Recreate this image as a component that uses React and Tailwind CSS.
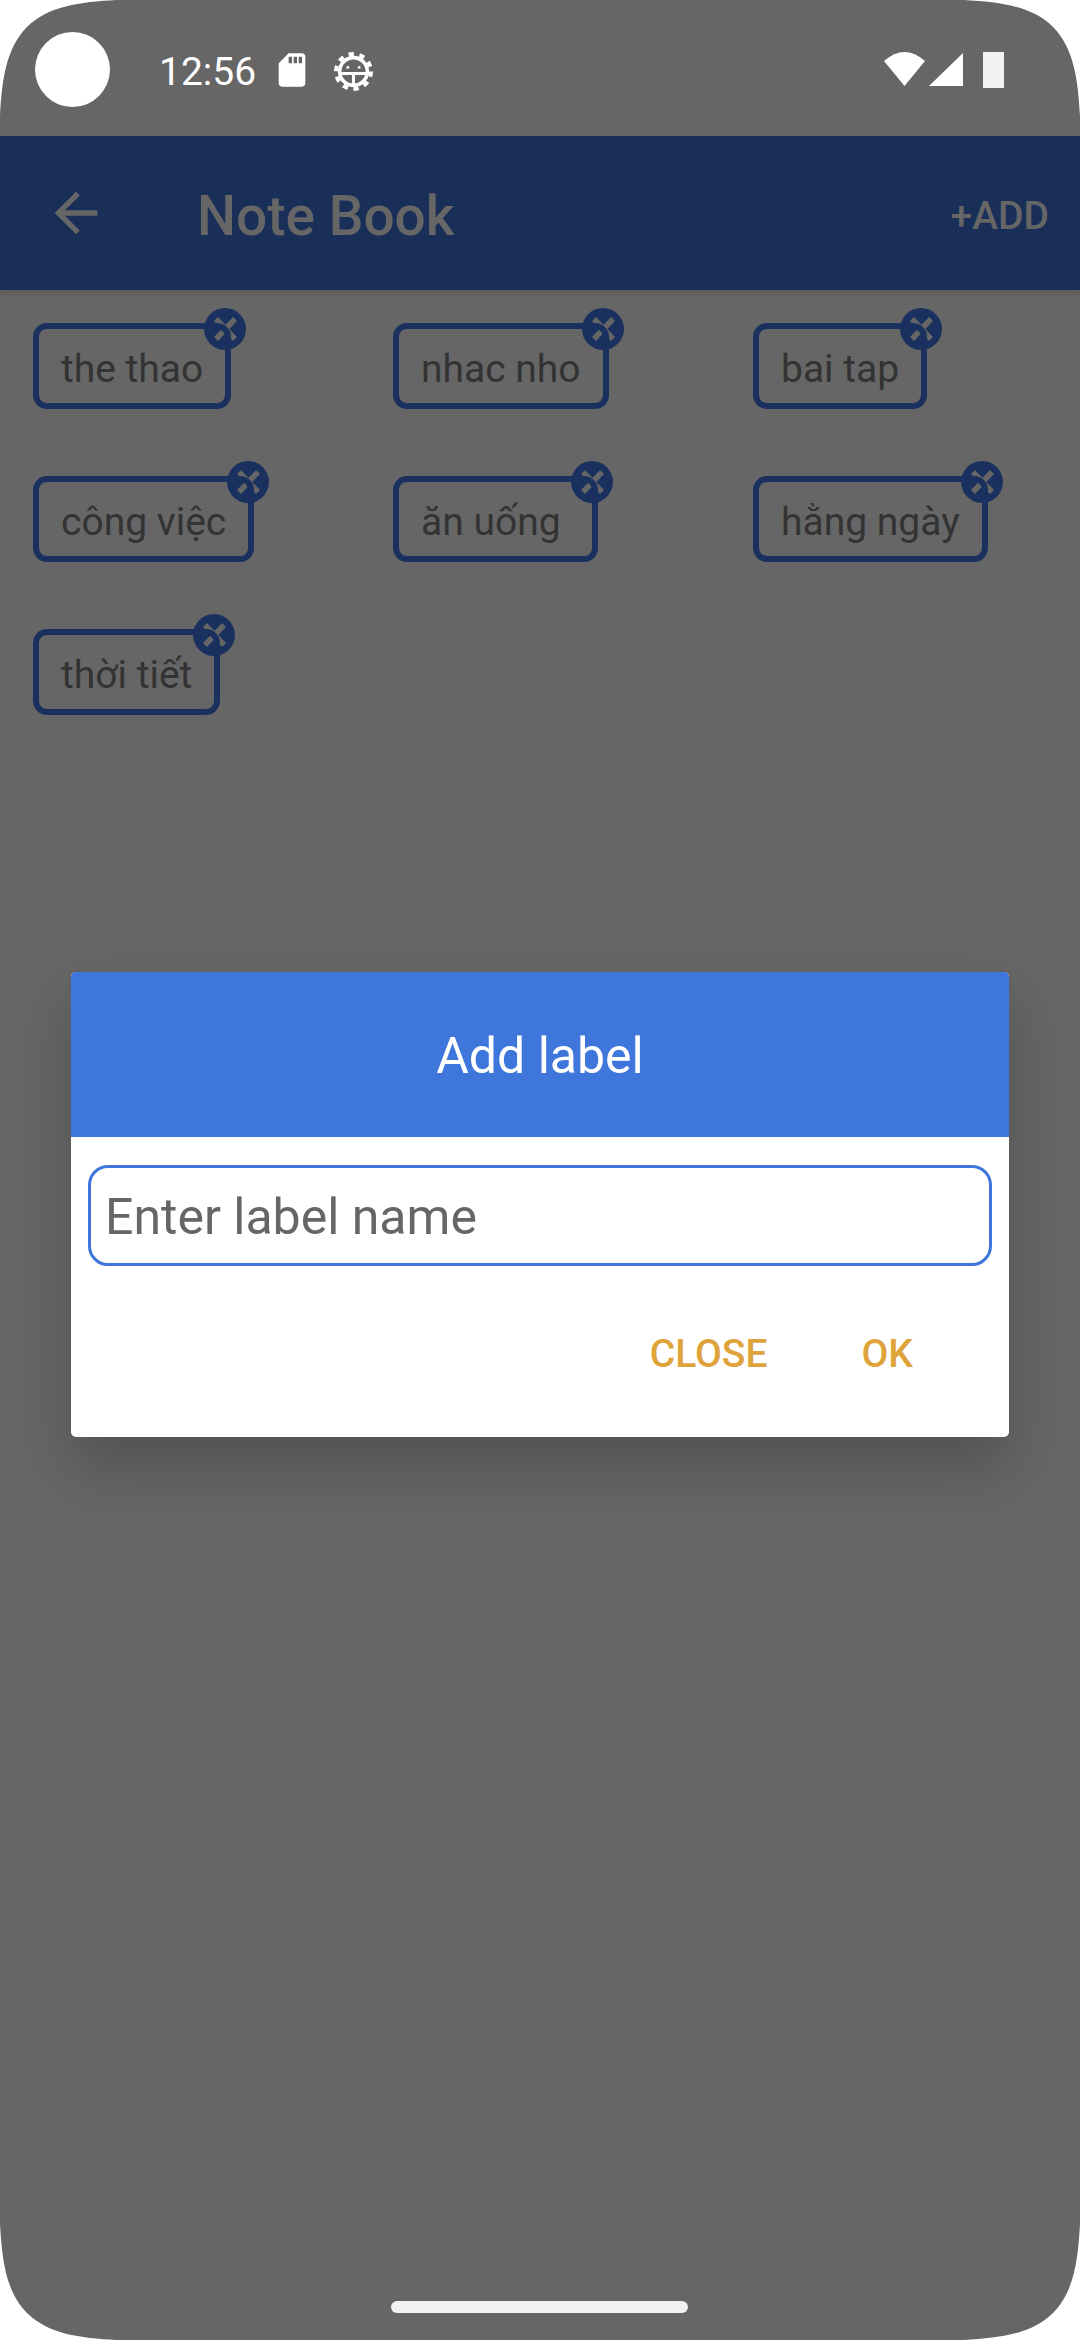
import { useState } from 'react'

// the reference keeps a trailing space in "ăn uống", the tag is wider for it
const tags = ['the thao', 'nhac nho', 'bai tap', 'công việc', 'ăn uống\u00A0', 'hằng ngày', 'thời tiết']

function GearIcon() {
  return (
    <svg width="39" height="39" viewBox="0 0 38 38" fill="none" stroke="#fff">
      <circle cx="19" cy="19" r="13.5" strokeWidth="3.5" />
      <circle cx="19" cy="19" r="17" strokeWidth="4" strokeDasharray="5.2 5.48" />
      <path d="M6 21H32M19 21V33" strokeWidth="3" />
      <circle cx="13.5" cy="15" r="1.4" fill="#fff" stroke="none" />
      <circle cx="24.5" cy="15" r="1.4" fill="#fff" stroke="none" />
    </svg>
  )
}

function SdIcon() {
  return (
    <svg width="40" height="40" viewBox="0 0 24 24" fill="#fff">
      <path d="M18 2h-8L4.02 8 4 20c0 1.1.9 2 2 2h12c1.1 0 2-.9 2-2V4c0-1.1-.9-2-2-2zm-6 6h-2V4h2v4zm3 0h-2V4h2v4zm3 0h-2V4h2v4z" />
    </svg>
  )
}

function Tag({ label }) {
  return (
    <div className="relative flex h-[86px] w-fit items-center rounded-[14px] border-[6px] border-[#1a315f] pl-[22px] pr-[22px] pt-[6px] text-[39px] text-[#333333]">
      {label}
      {/* the tag's corner runs over the x, so it is part of the drawing */}
      <svg className="absolute -right-[21px] -top-[21px]" width="42" height="42" viewBox="0 0 42 42" fill="none">
        <circle cx="21" cy="21" r="21" fill="#1a315f" />
        <path d="M12 11L31 31M31 11L12 31" stroke="#666666" strokeWidth="5.5" />
        <path d="M0 18H13A11 11 0 0 1 24 29V42" stroke="#1a315f" strokeWidth="6" />
      </svg>
    </div>
  )
}

function Corner({ className }) {
  return (
    <svg className={`absolute ${className}`} width="120" height="120" viewBox="0 0 120 120">
      <path d="M0 0H116C80 2 48 6 27 27C6 48 2 80 0 116Z" fill="#fff" />
    </svg>
  )
}

export default function App() {
  const [name, setName] = useState('')

  return (
    <div className="relative h-[2340px] w-[1080px] overflow-hidden bg-[#666666] font-['Roboto',sans-serif]">
      <div className="flex h-[136px] items-center pl-[35px] pr-[76px] pt-[3px] text-white">
        <div className="h-[75px] w-[75px] rounded-full bg-white" />
        <span className="ml-[49px] mt-[5px] text-[39px] leading-none">12:56</span>
        <span className="ml-[16px] mt-[1px]"><SdIcon /></span>
        <span className="ml-[22px] mt-[4px]"><GearIcon /></span>
        <svg className="ml-auto mt-[2px]" width="120" height="40" viewBox="0 0 120 40" fill="#fff">
          <path d="M0 10Q20.5 -8 41 10L20.5 35Z" />
          <path d="M45 35H79V2Z" />
          <rect x="99" y="1" width="21" height="36" fill="#f2f2f2" />
        </svg>
      </div>

      <header className="flex h-[154px] items-center bg-[#192f58] pl-[44px] pr-[31px] text-[#666666] shadow-[0_3px_6px_rgba(0,0,0,0.12)]">
        <svg width="64" height="64" viewBox="0 0 24 24" fill="#666666">
          <path d="M20 11H7.83l5.59-5.59L12 4l-8 8 8 8 1.41-1.41L7.83 13H20v-2z" />
        </svg>
        <h1 className="ml-[89px] mt-[6px] text-[55px] font-medium">Note Book</h1>
        <button className="ml-auto mt-[6px] text-[39px] font-medium">+ADD</button>
      </header>

      <div className="grid grid-cols-[360px_360px_1fr] gap-y-[67px] pl-[33px] pt-[33px]">
        {tags.map((t) => (
          <Tag key={t} label={t} />
        ))}
      </div>

      <div className="absolute left-[71px] top-[972px] h-[465px] w-[938px] overflow-hidden rounded-[5px] bg-white shadow-[0_30px_60px_rgba(0,0,0,0.2)]">
        <div className="flex h-[165px] items-center justify-center bg-[#3e76db] pt-[3px] text-[50px] text-white">Add label</div>
        <div className="px-[17px] pt-[28px]">
          <input
            value={name}
            onChange={(e) => setName(e.target.value)}
            placeholder="Enter label name"
            className="h-[101px] w-full rounded-[20px] border-[3px] border-[#3e76db] px-[14px] pt-[3px] text-[50px] outline-none placeholder:text-[#666666]"
          />
        </div>
        <div className="flex justify-end gap-[94px] pr-[96px] pt-[59px] text-[39px] font-medium text-[#dfa33c]">
          <button>CLOSE</button>
          <button>OK</button>
        </div>
      </div>

      <div className="absolute left-[391px] top-[2301px] h-[12px] w-[297px] rounded-full bg-[#f2f2f2]" />

      <Corner className="left-0 top-0" />
      <Corner className="right-0 top-0 -scale-x-100" />
      <Corner className="bottom-0 left-0 -scale-y-100" />
      <Corner className="bottom-0 right-0 -scale-100" />
    </div>
  )
}
